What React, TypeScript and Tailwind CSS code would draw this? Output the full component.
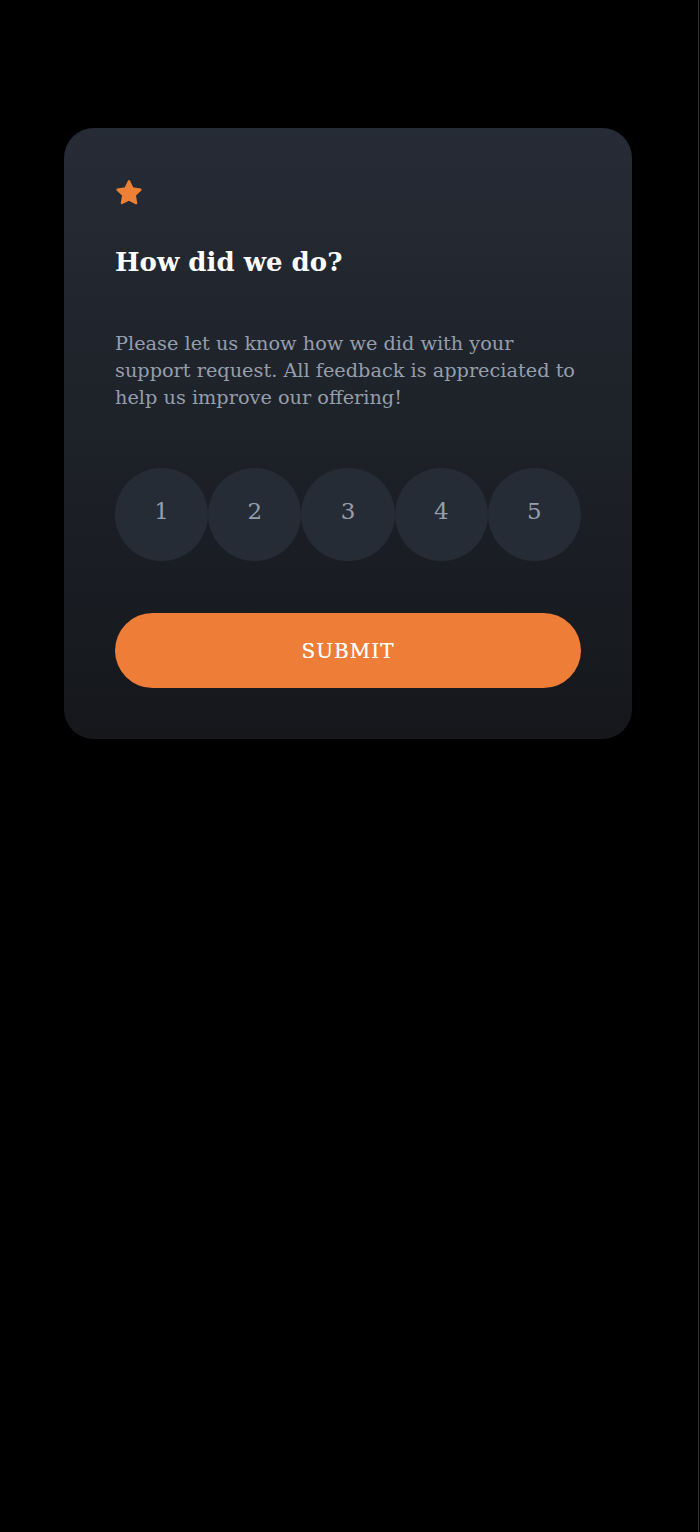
import React, { useState } from "react";

const serif = "font-['DejaVu_Serif','Liberation_Serif',serif]";

const Star = () => (
  <svg width="28" height="27" viewBox="0 0 24 23" aria-hidden="true">
    <path
      d="M12 1.8l3.05 6.2 6.8 1-4.93 4.8 1.17 6.78L12 17.37l-6.09 3.2 1.17-6.78L2.15 9l6.8-1z"
      fill="#ee8036"
      stroke="#ee8036"
      strokeWidth="2"
      strokeLinejoin="round"
    />
  </svg>
);

export default function App() {
  const [rating, setRating] = useState<number | null>(null);

  return (
    <div className="min-h-[1532px] w-full bg-black">
      <div className={`min-h-[1532px] w-[699px] border-r border-[#313131] pt-[128px] ${serif}`}>
        <div className="mx-[64px] w-[568px] rounded-[30px] bg-gradient-to-b from-[#262c36] to-[#15171b] p-[51px]">
          <Star />
          <h1 className="mt-[38px] text-[26px] leading-[36px] font-bold text-white">How did we do?</h1>
          <p className="mt-[50px] text-[19.3px] leading-[27px] text-[#959eac]">
            Please let us know how we did with your
            <br />
            support request. All feedback is appreciated to
            <br />
            help us improve our offering!
          </p>
          <div className="mt-[57px] flex">
            {[1, 2, 3, 4, 5].map((n) => (
              <button
                key={n}
                onClick={() => setRating(n)}
                className={`flex h-[93.4px] w-[93.4px] items-center justify-center rounded-full pb-[6px] text-[23px] ${
                  rating === n ? "bg-[#959eac] text-white" : "bg-[#262c36] text-[#959eac]"
                }`}
              >
                {n}
              </button>
            ))}
          </div>
          <button className="mt-[52px] h-[75px] w-full rounded-full bg-[#ee7d38] text-[20px] tracking-[1px] text-white [text-shadow:0_0_0.5px_#fff]">
            SUBMIT
          </button>
        </div>
      </div>
    </div>
  );
}
